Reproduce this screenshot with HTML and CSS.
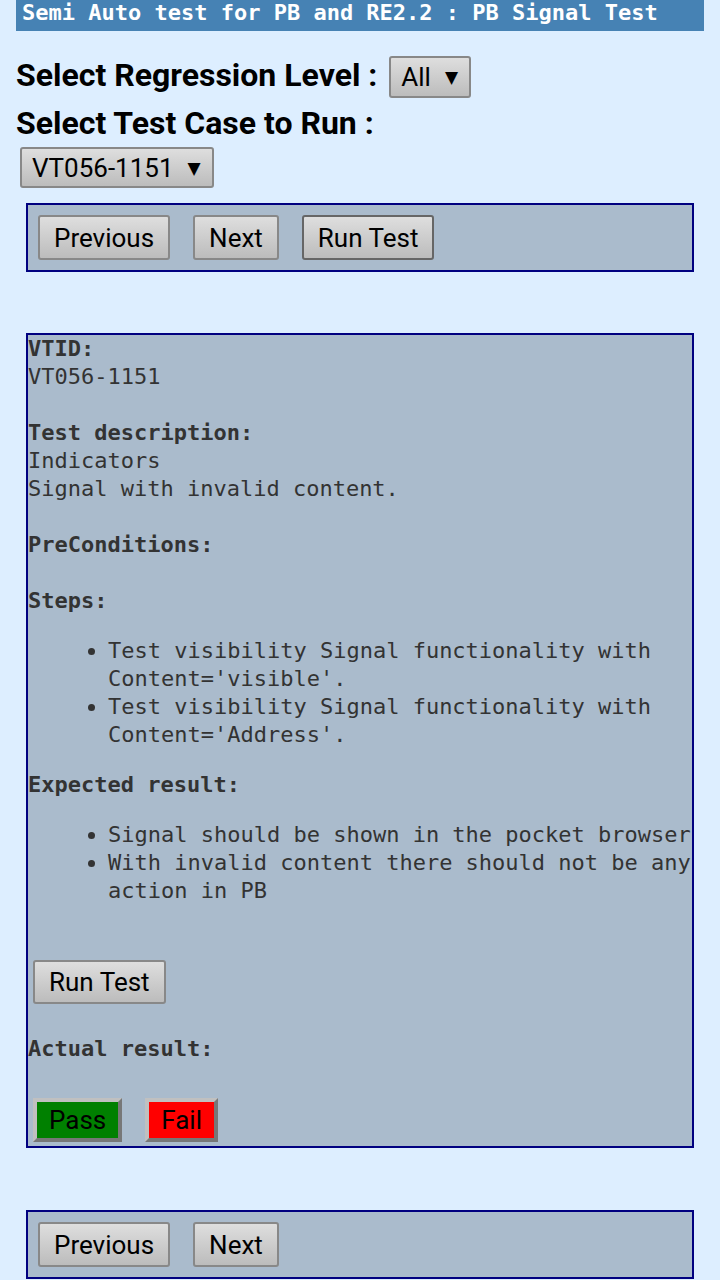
FILE: index.html
```html
<!DOCTYPE html>
<html>
<head>
<meta charset="utf-8">
<link rel="stylesheet" href="styles.css">
</head>
<body>
<div class="titlebar">Semi Auto test for PB and RE2.2 : PB Signal Test</div>
<div class="sel-line first">Select Regression Level : <span class="select"><span class="sel-text">All</span><span class="arrow">▼</span></span></div>
<div class="sel-line">Select Test Case to Run :</div>
<div class="sel-row"><span class="select"><span class="sel-text">VT056-1151</span><span class="arrow">▼</span></span></div>

<div class="panel nav">
  <button class="btn">Previous</button>
  <button class="btn">Next</button>
  <button class="btn focus">Run Test</button>
</div>

<div class="panel detail">
  <div class="lbl">VTID:</div>
  <div>VT056-1151</div>
  <div class="lbl gap">Test description:</div>
  <div>Indicators</div>
  <div>Signal with invalid content.</div>
  <div class="lbl gap">PreConditions:</div>
  <div class="lbl gap">Steps:</div>
  <ul>
    <li>Test visibility Signal functionality with Content='visible'.</li>
    <li>Test visibility Signal functionality with Content='Address'.</li>
  </ul>
  <div class="lbl">Expected result:</div>
  <ul>
    <li>Signal should be shown in the pocket browser</li>
    <li>With invalid content there should not be any action in PB</li>
  </ul>
  <div class="run-row"><button class="btn">Run Test</button></div>
  <div class="lbl actual">Actual result:</div>
  <div class="verdict">
    <button class="vbtn pass">Pass</button>
    <button class="vbtn fail">Fail</button>
  </div>
</div>

<div class="panel nav bottom">
  <button class="btn">Previous</button>
  <button class="btn">Next</button>
</div>
</body>
</html>
```
FILE: styles.css
```css
html, body {
  background: #ddeeff;
}
body {
  margin: 0 16px;
  font-family: Roboto, "Liberation Sans", sans-serif;
  color: #000;
}
.titlebar {
  background: #4682b4;
  color: #fff;
  font-family: "DejaVu Sans Mono", monospace;
  font-weight: bold;
  font-size: 22px;
  line-height: 25px;
  height: 31px;
  padding-left: 6px;
  white-space: nowrap;
  overflow: hidden;
}
.sel-line {
  font-size: 32px;
  font-weight: bold;
  line-height: 48px;
}
.sel-line.first {
  margin-top: 20px;
}
.select {
  display: inline-flex;
  align-items: center;
  box-sizing: border-box;
  height: 42px;
  vertical-align: middle;
  border: 2px solid #888;
  border-radius: 3px;
  background: linear-gradient(#dedede, #bcbcbc);
  font-weight: normal;
  font-size: 26px;
  padding: 0 11px 0 10px;
  margin-left: 4px;
  position: relative;
  top: -1px;
}
.arrow {
  font-family: "DejaVu Sans", sans-serif;
  font-size: 17px;
  margin-left: 14px;
}
.sel-row {
  margin-left: 4px;
  height: 41px;
}
.sel-row .select {
  height: 41px;
  top: 0;
  margin-left: 0;
}
.panel {
  margin: 0 10px;
  background: #aabbcc;
  border: 2px solid #000080;
}
.nav {
  margin-top: 15px;
  padding: 10px;
  display: flex;
  gap: 23px;
}
.btn {
  box-sizing: border-box;
  height: 45px;
  padding: 0 14px;
  border: 2px solid #888;
  border-radius: 3px;
  background: linear-gradient(#dedede, #bcbcbc);
  font-family: Roboto, "Liberation Sans", sans-serif;
  font-size: 26px;
  color: #000;
}
.btn.focus {
  border-color: #666;
}
.detail {
  margin-top: 61px;
  padding: 0 0 4px 0;
  font-family: "DejaVu Sans Mono", monospace;
  font-size: 22px;
  line-height: 28px;
  color: #333;
}
.lbl {
  font-weight: bold;
}
.gap {
  margin-top: 28px;
}
.detail ul {
  margin: 22px 0;
  padding-left: 80px;
}
.run-row {
  margin-top: 55px;
  padding-left: 5px;
}
.run-row .btn {
  height: 44px;
  padding: 0 14px;
}
.actual {
  margin-top: 31px;
}
.verdict {
  margin-top: 35px;
  padding-left: 5px;
  display: flex;
  gap: 23px;
}
.vbtn {
  box-sizing: border-box;
  height: 44px;
  padding: 0 12px;
  border-width: 4px;
  border-style: solid;
  border-color: #c0c0c0 #777 #777 #c0c0c0;
  font-family: Roboto, "Liberation Sans", sans-serif;
  font-size: 26px;
  color: #000;
  border-radius: 0;
}
.pass { background: #008000; }
.fail { background: #ff0000; }
.bottom {
  margin-top: 62px;
}
```
